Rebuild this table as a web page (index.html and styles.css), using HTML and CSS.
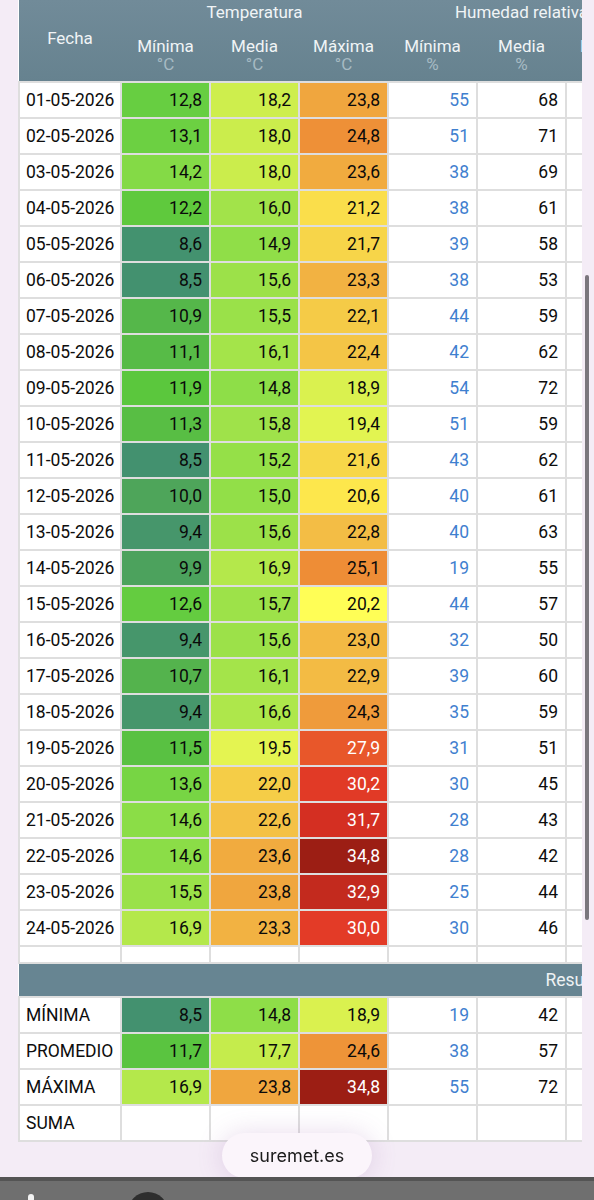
FILE: index.html
```html
<!DOCTYPE html>
<html lang="es">
<head>
    <meta charset="UTF-8">
    <meta name="viewport" content="width=device-width, initial-scale=1.0">
    <title>suremet.es - Resumen mensual</title>
    <link rel="stylesheet" href="styles.css">
</head>
<body>
    <div class="table-wrap">
        <table class="data">
            <colgroup>
                <col class="c-date">
                <col class="c-val"><col class="c-val"><col class="c-val">
                <col class="c-val"><col class="c-val"><col class="c-val">
                <col class="c-val"><col class="c-val"><col class="c-val">
                <col class="c-val"><col class="c-last">
            </colgroup>
            <thead>
                <tr class="grp">
                    <th rowspan="2" class="fecha">Fecha</th>
                    <th colspan="3">Temperatura</th>
                    <th colspan="3">Humedad relativa</th>
                    <th colspan="3">Viento</th>
                    <th colspan="2">Precipitación</th>
                </tr>
                <tr class="sub">
                    <th>Mínima<span>°C</span></th>
                    <th>Media<span>°C</span></th>
                    <th>Máxima<span>°C</span></th>
                    <th>Mínima<span>%</span></th>
                    <th>Media<span>%</span></th>
                    <th>Máxima<span>%</span></th>
                    <th>Media<span>km/h</span></th>
                    <th>Racha<span>km/h</span></th>
                    <th>Dir.<span>º</span></th>
                    <th>Total<span>mm</span></th>
                    <th>Horas<span>h</span></th>
                </tr>
            </thead>
            <tbody id="days"></tbody>
            <tbody>
                <tr class="spacer"><td></td><td></td><td></td><td></td><td></td><td></td><td></td><td></td><td></td><td></td><td></td><td></td></tr>
                <tr class="band"><th colspan="12">Resumen</th></tr>
            </tbody>
            <tbody id="summary"></tbody>
        </table>
    </div>

    <div class="scroll-thumb"></div>

    <div class="site-pill">suremet.es</div>

    <div class="navbar">
        <span class="nav-dot"></span>
        <span class="nav-circle"></span>
    </div>

    <script>
        const days = [
            ['01-05-2026', 12.8, 18.2, 23.8, 55, 68],
            ['02-05-2026', 13.1, 18.0, 24.8, 51, 71],
            ['03-05-2026', 14.2, 18.0, 23.6, 38, 69],
            ['04-05-2026', 12.2, 16.0, 21.2, 38, 61],
            ['05-05-2026', 8.6, 14.9, 21.7, 39, 58],
            ['06-05-2026', 8.5, 15.6, 23.3, 38, 53],
            ['07-05-2026', 10.9, 15.5, 22.1, 44, 59],
            ['08-05-2026', 11.1, 16.1, 22.4, 42, 62],
            ['09-05-2026', 11.9, 14.8, 18.9, 54, 72],
            ['10-05-2026', 11.3, 15.8, 19.4, 51, 59],
            ['11-05-2026', 8.5, 15.2, 21.6, 43, 62],
            ['12-05-2026', 10.0, 15.0, 20.6, 40, 61],
            ['13-05-2026', 9.4, 15.6, 22.8, 40, 63],
            ['14-05-2026', 9.9, 16.9, 25.1, 19, 55],
            ['15-05-2026', 12.6, 15.7, 20.2, 44, 57],
            ['16-05-2026', 9.4, 15.6, 23.0, 32, 50],
            ['17-05-2026', 10.7, 16.1, 22.9, 39, 60],
            ['18-05-2026', 9.4, 16.6, 24.3, 35, 59],
            ['19-05-2026', 11.5, 19.5, 27.9, 31, 51],
            ['20-05-2026', 13.6, 22.0, 30.2, 30, 45],
            ['21-05-2026', 14.6, 22.6, 31.7, 28, 43],
            ['22-05-2026', 14.6, 23.6, 34.8, 28, 42],
            ['23-05-2026', 15.5, 23.8, 32.9, 25, 44],
            ['24-05-2026', 16.9, 23.3, 30.0, 30, 46]
        ];

        const summary = [
            ['MÍNIMA', 8.5, 14.8, 18.9, 19, 42],
            ['PROMEDIO', 11.7, 17.7, 24.6, 38, 57],
            ['MÁXIMA', 16.9, 23.8, 34.8, 55, 72],
            ['SUMA']
        ];

        // temperature colour scale
        const stops = [
            [8.5, '#43916f'], [9.5, '#46976a'], [10, '#4ea55a'], [11, '#56b948'],
            [12, '#5cc83c'], [13, '#6acf42'], [14, '#80d946'], [15, '#92df48'],
            [16, '#a2e34a'], [17, '#b6e94b'], [18, '#cbed4c'], [19.5, '#e4f451'],
            [20.2, '#fffe56'], [20.6, '#fde74c'], [21.5, '#f8da4a'], [22, '#f5cd47'],
            [23, '#f3b944'], [23.8, '#f0a63e'], [24.8, '#ee9037'], [25.5, '#ed8834'],
            [28, '#e8552a'], [30, '#e33b27'], [31.7, '#d42f22'], [33, '#c22a1e'],
            [35, '#981d13']
        ];

        function hexToRgb(h) {
            return [1, 3, 5].map(i => parseInt(h.substr(i, 2), 16));
        }

        function tempColor(t) {
            if (t <= stops[0][0]) return stops[0][1];
            for (let i = 1; i < stops.length; i++) {
                if (t <= stops[i][0]) {
                    const [t0, c0] = stops[i - 1];
                    const [t1, c1] = stops[i];
                    const k = (t - t0) / (t1 - t0);
                    const a = hexToRgb(c0), b = hexToRgb(c1);
                    const rgb = a.map((v, j) => Math.round(v + (b[j] - v) * k));
                    return 'rgb(' + rgb.join(',') + ')';
                }
            }
            return stops[stops.length - 1][1];
        }

        function fmt(n) {
            return n.toFixed(1).replace('.', ',');
        }

        function buildRow(r) {
            const tr = document.createElement('tr');
            let html = '<td class="label">' + r[0] + '</td>';
            for (let i = 1; i <= 3; i++) {
                if (r[i] === undefined) { html += '<td></td>'; continue; }
                const hot = r[i] >= 26 ? ' hot' : '';
                html += '<td class="temp' + hot + '" style="background:' + tempColor(r[i]) + '">' + fmt(r[i]) + '</td>';
            }
            html += '<td class="hmin">' + (r[4] !== undefined ? r[4] : '') + '</td>';
            html += '<td>' + (r[5] !== undefined ? r[5] : '') + '</td>';
            for (let i = 0; i < 6; i++) html += '<td></td>';
            tr.innerHTML = html;
            return tr;
        }

        const daysBody = document.getElementById('days');
        days.forEach(r => daysBody.appendChild(buildRow(r)));

        const sumBody = document.getElementById('summary');
        summary.forEach(r => sumBody.appendChild(buildRow(r)));
    </script>
</body>
</html>
```

FILE: styles.css
```css
html, body {
    margin: 0;
    padding: 0;
}
body {
    background: #f4ecf6;
    font-family: Roboto, "Noto Sans", sans-serif;
    height: 1200px;
    overflow: hidden;
}
.table-wrap {
    margin-left: 18px;
    width: 564px;
    overflow: hidden;
}
.data {
    border-collapse: collapse;
    table-layout: fixed;
    width: 1126px;
    background: #fff;
}
.c-date {
    width: 102px;
}
.c-val {
    width: 89px;
}
.c-last {
    width: 134px;
}

/* header */
thead {
    background: linear-gradient(#718b99, #66828f);
}
thead th {
    background: transparent;
    color: #f0f4f6;
    font-weight: 400;
    font-size: 17px;
    border: 0;
    padding: 0;
}
thead .grp th {
    height: 25px;
    line-height: 25px;
}
thead .grp th.fecha {
    vertical-align: middle;
    padding-bottom: 4px;
}
thead .sub th {
    height: 53px;
    line-height: 18px;
    vertical-align: middle;
    padding-top: 3px;
}
thead .sub th span {
    display: block;
    color: #a6bac3;
}

/* body cells */
td {
    border: 2px solid #dedede;
    height: 34px;
    padding: 0 7px;
    font-size: 17.5px;
    color: #0d0d0d;
    text-align: right;
    white-space: nowrap;
}
td.label {
    text-align: left;
    padding-left: 6px;
}
td.temp {
    color: #0a0a0a;
}
td.hot {
    color: #fff;
}
td.hmin {
    color: #3f80cf;
}
.spacer td {
    height: 15px;
}
.band th {
    background: #678592;
    color: #eef2f4;
    font-weight: 400;
    font-size: 17.5px;
    height: 32px;
    padding: 0;
    border: 0;
    text-align: center;
}

/* overlays */
.scroll-thumb {
    position: fixed;
    right: 5px;
    top: 275px;
    width: 4px;
    height: 645px;
    border-radius: 2px;
    background: #7a767d;
}
.site-pill {
    position: fixed;
    left: 50%;
    bottom: 22px;
    transform: translateX(-50%);
    width: 150px;
    height: 45px;
    line-height: 45px;
    border-radius: 23px;
    background: #fbf5fb;
    box-shadow: 0 0 26px rgba(150, 90, 170, 0.22);
    text-align: center;
    font-family: Inter, "Noto Sans", sans-serif;
    font-size: 18px;
    color: #1b1b1b;
}
.navbar {
    position: fixed;
    left: 0;
    right: 0;
    bottom: 0;
    height: 19px;
    background: #6f6f6f;
    border-top: 4px solid #545454;
    overflow: hidden;
}
.nav-dot {
    position: absolute;
    left: 28px;
    top: 13px;
    width: 6px;
    height: 8px;
    border-radius: 3px;
    background: #f2f2f2;
}
.nav-circle {
    position: absolute;
    left: 128px;
    top: 11px;
    width: 40px;
    height: 40px;
    border-radius: 50%;
    background: #2e2e2e;
}
```
